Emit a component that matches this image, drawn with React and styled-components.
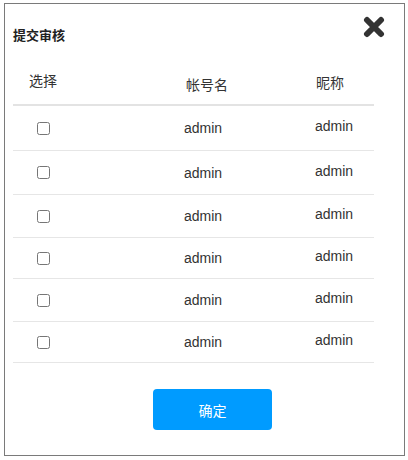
import React from 'react';
import styled, { createGlobalStyle } from 'styled-components';

const GlobalStyle = createGlobalStyle`
  body {
    margin: 0;
    background: #fff;
    font-family: "Liberation Sans", "Noto Sans CJK SC", sans-serif;
    color: #333;
  }
`;

const cjk = `"Noto Sans CJK SC", "Liberation Sans", sans-serif`;

const Dialog = styled.div`
  box-sizing: border-box;
  width: 401px;
  height: 453px;
  margin: 3px 0 0 4px;
  border: 1px solid #7a7a7a;
  padding: 0 30px 0 8px;
  display: flex;
  flex-direction: column;
`;

const TitleBar = styled.div`
  box-sizing: border-box;
  height: 59px;
  display: flex;
  justify-content: space-between;
  align-items: flex-start;
  padding-top: 12px;
  margin-right: -11px;
`;

const Title = styled.h3`
  margin: 0;
  padding-top: 10px;
  font-family: ${cjk};
  font-size: 13px;
  font-weight: bold;
  line-height: 18px;
  color: #222;
`;

const CloseButton = styled.button`
  border: none;
  background: none;
  padding: 0;
  width: 22px;
  height: 22px;
  cursor: pointer;
  display: flex;
`;

const Grid = styled.div`
  display: grid;
  grid-template-columns: 60px 1fr 59px;
  align-items: center;
  height: ${p => p.$h}px;
  border-bottom: ${p => (p.$head ? '2px solid #e3e3e3' : '1px solid #e6e6e6')};
`;

const Cell = styled.div`
  box-sizing: border-box;
  display: flex;
  align-items: center;
  justify-content: ${p => (p.$left ? 'flex-start' : 'center')};
  padding-left: ${p => p.$pl || 0}px;
  padding-bottom: ${p => p.$raise || 0}px;
  font-family: ${p => (p.$cjk ? cjk : '"Liberation Sans", sans-serif')};
  font-size: 14px;
  color: #333;
`;

const Check = styled.input`
  margin: 0;
  width: 13px;
  height: 13px;
`;

const Footer = styled.div`
  display: flex;
  padding: 26px 0 0 140px;
`;

const Confirm = styled.button`
  width: 119px;
  height: 41px;
  border: none;
  border-radius: 4px;
  background: #009bff;
  color: #fff;
  font-family: ${cjk};
  font-size: 14px;
  cursor: pointer;
`;

const heights = [44, 43, 42, 40, 42, 40];
const rows = heights.map((h, i) => ({ id: i + 1, h, account: 'admin', nick: 'admin' }));

const CloseIcon = () => (
  <svg width="22" height="22" viewBox="0 0 22 22">
    <path d="M4 4 L18 18 M18 4 L4 18" stroke="#333" strokeWidth="6" strokeLinecap="round" />
  </svg>
);

export default function App() {
  return (
    <>
      <GlobalStyle />
      <Dialog>
        <TitleBar>
          <Title>提交审核</Title>
          <CloseButton aria-label="关闭">
            <CloseIcon />
          </CloseButton>
        </TitleBar>
        <Grid $head $h={41}>
          <Cell $cjk $raise={8}>选择</Cell>
          <Cell $cjk $pl={26}>帐号名</Cell>
          <Cell $cjk $left $pl={1} $raise={4}>昵称</Cell>
        </Grid>
        {rows.map(r => (
          <Grid key={r.id} $h={r.h}>
            <Cell>
              <Check type="checkbox" />
            </Cell>
            <Cell $pl={18}>{r.account}</Cell>
            <Cell $left $raise={4}>{r.nick}</Cell>
          </Grid>
        ))}
        <Footer>
          <Confirm>确定</Confirm>
        </Footer>
      </Dialog>
    </>
  );
}
